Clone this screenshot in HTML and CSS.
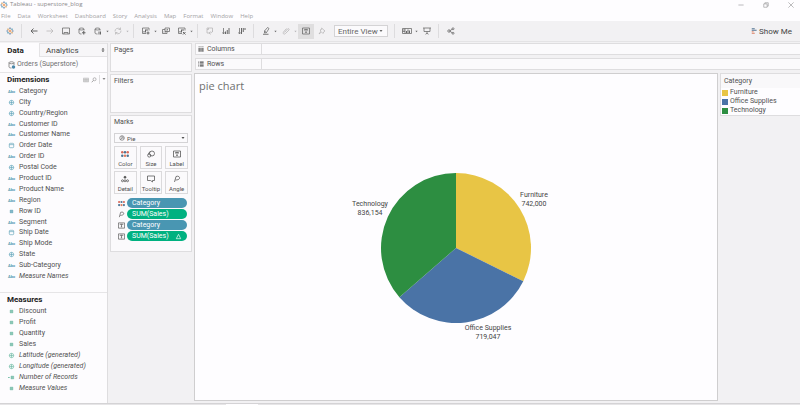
FILE: index.html
```html
<!DOCTYPE html>
<html lang="en">
<head>
    <meta charset="UTF-8">
    <meta name="viewport" content="width=device-width, initial-scale=1">
    <title>Tableau - superstore_blog</title>
    <link rel="stylesheet" href="styles.css">
</head>

<body>

<!-- Icon sprite -->
<svg class="sprite" aria-hidden="true">
    <symbol id="i-logo" viewBox="0 0 16 16"><path d="M8 5v6M5 8h6" stroke="#e8833a" stroke-width="1.6"/><path d="M8 1v3M6.500 2.500h3M8 12v3M6.500 13.500h3" stroke="#5b7fa8"/><path d="M1 8h3M2.500 6.500v3M12 8h3M13.500 6.500v3" stroke="#6b8fb0"/><path d="M4 3v3M2.500 4.500h3M12 10v3M10.500 11.500h3" stroke="#d9a05c"/><path d="M12 3v3M10.500 4.500h3M4 10v3M2.500 11.500h3" stroke="#4f9ab5"/></symbol>
    <symbol id="i-back" viewBox="0 0 16 16"><path d="M15 8H2M7 3L2 8l5 5" stroke-width="2"/></symbol>
    <symbol id="i-forward" viewBox="0 0 16 16"><path d="M1 8h13M9 3l5 5-5 5"/></symbol>
    <symbol id="i-save" viewBox="0 0 16 16"><path d="M1 2h14v12H1zM4 14v-3h8v3"/></symbol>
    <symbol id="i-data-add" viewBox="0 0 16 16"><path d="M2 4v8c0 1 2 2 5 2M12 4v3"/><ellipse cx="7" cy="4" rx="5" ry="2"/><path d="M11.500 8v7M8 11.500h7" stroke-width="2.200"/></symbol>
    <symbol id="i-data-pause" viewBox="0 0 16 16"><path d="M2 4v8c0 1 2 2 5 2M12 4v3"/><ellipse cx="7" cy="4" rx="5" ry="2"/><path d="M10 9v6M13 9v6" stroke-width="2"/></symbol>
    <symbol id="i-refresh" viewBox="0 0 16 16"><path d="M2 9a6 6 0 0 1 10-5l1 1M14 7a6 6 0 0 1-10 5l-1-1M13 1v4H9M3 15v-4h4"/></symbol>
    <symbol id="i-sheet-add" viewBox="0 0 16 16"><path d="M8 13H1V2h13v5"/><path d="M4 11V8M7 11V5M10 8V4" stroke-width="2"/><path d="M12 9v6M9 12h6" stroke-width="2"/></symbol>
    <symbol id="i-duplicate" viewBox="0 0 16 16"><path d="M6 2h9v7H6zM6 5H1v8h9V9M8.500 7V5M11 7V4M4 11V9M7 11V9"/></symbol>
    <symbol id="i-sheet-clear" viewBox="0 0 16 16"><path d="M8 13H1V2h13v5"/><path d="M4 11V8M7 11V5M10 8V4" stroke-width="2"/><path d="M10 10l5 5M15 10l-5 5" stroke-width="2"/></symbol>
    <symbol id="i-swap" viewBox="0 0 16 16"><path d="M2 5V2h11v8M2 5v7h4M5 2v3H2M13 7c0 4-2 5-6 5M9 9l-3 3 3 3"/></symbol>
    <symbol id="i-sort-asc" viewBox="0 0 16 16"><path d="M3 2v11M1 11l2 3 2-3"/><path d="M7 14V9M10.500 14V6M14 14V2" stroke-width="2"/></symbol>
    <symbol id="i-sort-desc" viewBox="0 0 16 16"><path d="M3 2v11M1 11l2 3 2-3"/><path d="M7 2v12M10.500 2v8M14 2v4" stroke-width="2"/></symbol>
    <symbol id="i-highlight" viewBox="0 0 16 16"><path d="M5 8l6-7 3 2-5 8-4 1zM5 8l4 3"/><path d="M2 14.500h11" stroke-width="1.800"/></symbol>
    <symbol id="i-clip" viewBox="0 0 16 16"><path d="M5 11l6-7c2-2 4 0 3 2l-7 7c-3 3-6 0-4-3l6-7"/></symbol>
    <symbol id="i-label" viewBox="0 0 16 16"><path d="M1 2h14v12H1zM5 7V5h6v2M8 5v6M6.500 11h3"/></symbol>
    <symbol id="i-pin" viewBox="0 0 16 16"><path d="M7 2l7 6-2 1-2 4-3-3-5 4 4-6-2-2 4-2z"/></symbol>
    <symbol id="i-cards" viewBox="0 0 20 16"><path d="M1 3h18v10H1zM6 3v10M1 6h5M1 9h5"/><path d="M9 12V8M12 12V5M15 12V7" stroke-width="2"/></symbol>
    <symbol id="i-present" viewBox="0 0 16 16"><path d="M0 2h16M2 2v7h12V2M8 9v4M5 14.500l3-2 3 2"/></symbol>
    <symbol id="i-share" viewBox="0 0 16 16"><path d="M5 8l6-4M5 8l6 4"/><circle cx="4" cy="8" r="2.500"/><circle cx="12" cy="3.500" r="2"/><circle cx="12" cy="12.500" r="2"/></symbol>
    <symbol id="i-showme" viewBox="0 0 16 16"><path d="M2 2h8" stroke="#4a6d8c" stroke-width="2.500"/><path d="M2 6h13" stroke="#4a6d8c" stroke-width="2.500"/><path d="M2 10h5" stroke="#e88a6c" stroke-width="2.500"/><path d="M2 14h8" stroke="#d9775a" stroke-width="2.500"/></symbol>
    <symbol id="i-min" viewBox="0 0 16 16"><path d="M1 8h14"/></symbol>
    <symbol id="i-restore" viewBox="0 0 16 16"><path d="M2 5h9v9H2zM5 5V2h9v9h-3"/></symbol>
    <symbol id="i-close" viewBox="0 0 16 16"><path d="M1 1l14 14M15 1L1 15"/></symbol>
    <symbol id="i-caret" viewBox="0 0 8 8"><path d="M1 2h6L4 6z" fill="currentColor" stroke="none"/></symbol>
    <symbol id="i-updown" viewBox="0 0 8 8"><path d="M4 0l3 3H1zM1 5h6L4 8z" fill="currentColor" stroke="none"/></symbol>
    <symbol id="i-source" viewBox="0 0 16 16"><ellipse cx="7" cy="3.500" rx="5" ry="2"/><path d="M2 3.500V12c0 1 2 2 5 2M12 3.500V8"/><circle cx="11" cy="12" r="3.500" fill="#4a86a8" stroke="none"/></symbol>
    <symbol id="i-globe" viewBox="0 0 16 16"><circle cx="8" cy="8" r="5"/><path d="M3 8h10M8 3v10"/></symbol>
    <symbol id="i-date" viewBox="0 0 16 16"><rect x="3" y="3" width="10" height="10" rx="2"/><path d="M3 6h10"/></symbol>
    <symbol id="i-number" viewBox="0 0 16 16"><path d="M6.500 4v8M9.500 4v8M4 6.500h8M4 9.500h8" stroke-width="2"/></symbol>
    <symbol id="i-calc" viewBox="0 0 16 16"><path d="M8.500 4v8M11.500 4v8M6 6.500h8M6 9.500h8" stroke-width="2"/><path d="M0 8h4" stroke-width="2"/></symbol>
    <symbol id="i-grid" viewBox="0 0 16 16"><path d="M1 3h14v10H1zM1 6.500h14M1 10h14M5.500 3v10M10.500 3v10" stroke-width="1"/></symbol>
    <symbol id="i-search" viewBox="0 0 16 16"><circle cx="9.500" cy="6" r="4"/><path d="M6.500 9L2 14" stroke-width="2"/></symbol>
    <symbol id="i-columns" viewBox="0 0 16 16"><path d="M3 5v10M8 5v10M13 5v10M3 1v2M8 1v2M13 1v2" stroke-width="3"/></symbol>
    <symbol id="i-rows" viewBox="0 0 16 16"><path d="M5 3h10M5 8h10M5 13h10M1 3h2M1 8h2M1 13h2" stroke-width="3"/></symbol>
    <symbol id="i-pie" viewBox="0 0 16 16"><circle cx="8" cy="8" r="6"/><path d="M8 2v6h6M8 8L4 12.500"/></symbol>
    <symbol id="i-color" viewBox="0 0 16 16"><g stroke="none"><circle cx="2.500" cy="4.500" r="2.500" fill="#d96a5a"/><circle cx="8" cy="4.500" r="2.500" fill="#4a7494"/><circle cx="13.500" cy="4.500" r="2.500" fill="#d96a5a"/><circle cx="2.500" cy="11.500" r="2.500" fill="#4a7494"/><circle cx="8" cy="11.500" r="2.500" fill="#e07a5c"/><circle cx="13.500" cy="11.500" r="2.500" fill="#4a7494"/></g></symbol>
    <symbol id="i-size" viewBox="0 0 16 16"><circle cx="10" cy="7" r="5"/><circle cx="4.500" cy="11" r="3.200"/><path d="M2 9l4-6"/></symbol>
    <symbol id="i-detail" viewBox="0 0 16 16"><circle cx="3" cy="11.500" r="2"/><circle cx="8" cy="11.500" r="2"/><circle cx="13" cy="11.500" r="2"/><circle cx="8" cy="4.500" r="2" fill="currentColor"/></symbol>
    <symbol id="i-tooltip" viewBox="0 0 16 16"><path d="M1 2h14v9h-4v3l-4-3H1z"/></symbol>
    <symbol id="i-angle" viewBox="0 0 16 16"><path d="M3 14L6 3c5-2 8 1 7 4-1 2-4 3-8 3"/></symbol>
    <symbol id="i-delta" viewBox="0 0 16 16"><path d="M8 3l5 10H3z"/></symbol>
</svg>

<header>
    <div class="titlebar">
        <svg class="icon app-icon"><use href="#i-logo"/></svg>
        <span>Tableau - superstore_blog</span>
        <div class="window-controls">
            <button aria-label="Minimize"><svg class="icon"><use href="#i-min"/></svg></button>
            <button aria-label="Restore"><svg class="icon"><use href="#i-restore"/></svg></button>
            <button aria-label="Close"><svg class="icon"><use href="#i-close"/></svg></button>
        </div>
    </div>

    <nav class="menu">
        <a href="#">File</a>
        <a href="#">Data</a>
        <a href="#">Worksheet</a>
        <a href="#">Dashboard</a>
        <a href="#">Story</a>
        <a href="#">Analysis</a>
        <a href="#">Map</a>
        <a href="#">Format</a>
        <a href="#">Window</a>
        <a href="#">Help</a>
    </nav>

    <div class="toolbar">
        <button class="tool" aria-label="Start page"><svg class="icon"><use href="#i-logo"/></svg></button>
        <span class="sep"></span>
        <button class="tool" aria-label="Undo"><svg class="icon"><use href="#i-back"/></svg></button>
        <button class="tool dim" aria-label="Redo"><svg class="icon"><use href="#i-forward"/></svg></button>
        <button class="tool" aria-label="Save"><svg class="icon"><use href="#i-save"/></svg></button>
        <button class="tool" aria-label="New data source"><svg class="icon"><use href="#i-data-add"/></svg></button>
        <button class="tool" aria-label="Pause updates"><svg class="icon"><use href="#i-data-pause"/></svg></button>
        <button class="caret" aria-label="Update options"><svg><use href="#i-caret"/></svg></button>
        <button class="tool dim" aria-label="Refresh"><svg class="icon"><use href="#i-refresh"/></svg></button>
        <button class="caret dim" aria-label="Refresh options"><svg><use href="#i-caret"/></svg></button>
        <span class="sep"></span>
        <button class="tool" aria-label="New worksheet"><svg class="icon"><use href="#i-sheet-add"/></svg></button>
        <button class="caret" aria-label="New worksheet options"><svg><use href="#i-caret"/></svg></button>
        <button class="tool" aria-label="Duplicate"><svg class="icon"><use href="#i-duplicate"/></svg></button>
        <button class="tool" aria-label="Clear sheet"><svg class="icon"><use href="#i-sheet-clear"/></svg></button>
        <button class="caret" aria-label="Clear options"><svg><use href="#i-caret"/></svg></button>
        <span class="sep"></span>
        <button class="tool dim" aria-label="Swap rows and columns"><svg class="icon"><use href="#i-swap"/></svg></button>
        <button class="tool" aria-label="Sort ascending"><svg class="icon"><use href="#i-sort-asc"/></svg></button>
        <button class="tool" aria-label="Sort descending"><svg class="icon"><use href="#i-sort-desc"/></svg></button>
        <span class="sep"></span>
        <button class="tool" aria-label="Highlight"><svg class="icon"><use href="#i-highlight"/></svg></button>
        <button class="caret" aria-label="Highlight options"><svg><use href="#i-caret"/></svg></button>
        <button class="tool dim" aria-label="Group members"><svg class="icon"><use href="#i-clip"/></svg></button>
        <button class="caret dim" aria-label="Group options"><svg><use href="#i-caret"/></svg></button>
        <button class="tool active" aria-label="Show mark labels"><svg class="icon"><use href="#i-label"/></svg></button>
        <button class="tool dim" aria-label="Fix axes"><svg class="icon"><use href="#i-pin"/></svg></button>
        <div class="select fit">
            <select aria-label="Fit">
                <option>Entire View</option>
                <option>Standard</option>
            </select>
            <svg class="arrow"><use href="#i-caret"/></svg>
        </div>
        <span class="sep"></span>
        <button class="tool" aria-label="Show or hide cards"><svg class="icon wide"><use href="#i-cards"/></svg></button>
        <button class="caret" aria-label="Card options"><svg><use href="#i-caret"/></svg></button>
        <button class="tool" aria-label="Presentation mode"><svg class="icon"><use href="#i-present"/></svg></button>
        <span class="sep"></span>
        <button class="tool" aria-label="Share"><svg class="icon"><use href="#i-share"/></svg></button>
        <button class="show-me"><svg class="icon"><use href="#i-showme"/></svg>Show Me</button>
    </div>
</header>

<main class="workspace">
    <aside class="data-pane">
        <div class="tabs">
            <button class="tab selected">Data</button>
            <button class="tab">Analytics<svg class="arrow"><use href="#i-updown"/></svg></button>
        </div>
        <a class="source" href="#"><svg class="icon"><use href="#i-source"/></svg>Orders (Superstore)</a>

        <section class="dimensions">
            <div class="pane-head">
                <h2>Dimensions</h2>
                <button aria-label="View data"><svg class="icon"><use href="#i-grid"/></svg></button>
                <button aria-label="Find field"><svg class="icon"><use href="#i-search"/></svg></button>
                <button class="more" aria-label="Pane options"><svg class="arrow"><use href="#i-caret"/></svg></button>
            </div>
            <ul class="fields">
                <li><span class="abc">Abc</span>Category</li>
                <li><svg class="icon"><use href="#i-globe"/></svg>City</li>
                <li><svg class="icon"><use href="#i-globe"/></svg>Country/Region</li>
                <li><span class="abc">Abc</span>Customer ID</li>
                <li><span class="abc">Abc</span>Customer Name</li>
                <li><svg class="icon"><use href="#i-date"/></svg>Order Date</li>
                <li><span class="abc">Abc</span>Order ID</li>
                <li><svg class="icon"><use href="#i-globe"/></svg>Postal Code</li>
                <li><span class="abc">Abc</span>Product ID</li>
                <li><span class="abc">Abc</span>Product Name</li>
                <li><span class="abc">Abc</span>Region</li>
                <li><svg class="icon"><use href="#i-number"/></svg>Row ID</li>
                <li><span class="abc">Abc</span>Segment</li>
                <li><svg class="icon"><use href="#i-date"/></svg>Ship Date</li>
                <li><span class="abc">Abc</span>Ship Mode</li>
                <li><svg class="icon"><use href="#i-globe"/></svg>State</li>
                <li><span class="abc">Abc</span>Sub-Category</li>
                <li><span class="abc">Abc</span><em>Measure Names</em></li>
            </ul>
        </section>

        <section class="measures">
            <div class="pane-head">
                <h2>Measures</h2>
            </div>
            <ul class="fields">
                <li><svg class="icon"><use href="#i-number"/></svg>Discount</li>
                <li><svg class="icon"><use href="#i-number"/></svg>Profit</li>
                <li><svg class="icon"><use href="#i-number"/></svg>Quantity</li>
                <li><svg class="icon"><use href="#i-number"/></svg>Sales</li>
                <li><svg class="icon"><use href="#i-globe"/></svg><em>Latitude (generated)</em></li>
                <li><svg class="icon"><use href="#i-globe"/></svg><em>Longitude (generated)</em></li>
                <li><svg class="icon"><use href="#i-calc"/></svg><em>Number of Records</em></li>
                <li><svg class="icon"><use href="#i-number"/></svg><em>Measure Values</em></li>
            </ul>
        </section>
    </aside>

    <aside class="cards">
        <section class="card pages"><h3>Pages</h3></section>
        <section class="card filters"><h3>Filters</h3></section>
        <section class="card marks">
            <h3>Marks</h3>
            <div class="select mark-type">
                <svg class="icon"><use href="#i-pie"/></svg>
                <select aria-label="Mark type">
                    <option>Pie</option>
                    <option>Bar</option>
                </select>
                <svg class="arrow"><use href="#i-caret"/></svg>
            </div>
            <div class="mark-buttons">
                <button><svg class="icon"><use href="#i-color"/></svg>Color</button>
                <button><svg class="icon"><use href="#i-size"/></svg>Size</button>
                <button><svg class="icon"><use href="#i-label"/></svg>Label</button>
                <button><svg class="icon"><use href="#i-detail"/></svg>Detail</button>
                <button><svg class="icon"><use href="#i-tooltip"/></svg>Tooltip</button>
                <button><svg class="icon"><use href="#i-angle"/></svg>Angle</button>
            </div>
            <ul class="pills">
                <li><svg class="icon"><use href="#i-color"/></svg><span class="pill blue">Category</span></li>
                <li><svg class="icon"><use href="#i-angle"/></svg><span class="pill green">SUM(Sales)</span></li>
                <li><svg class="icon"><use href="#i-label"/></svg><span class="pill blue">Category</span></li>
                <li><svg class="icon"><use href="#i-label"/></svg><span class="pill green">SUM(Sales)<svg class="icon"><use href="#i-delta"/></svg></span></li>
            </ul>
        </section>
    </aside>

    <div class="sheet">
        <div class="shelf"><span class="shelf-name"><svg class="icon"><use href="#i-columns"/></svg>Columns</span></div>
        <div class="shelf"><span class="shelf-name"><svg class="icon"><use href="#i-rows"/></svg>Rows</span></div>
        <div class="view-row">
            <section class="view">
                <h1>pie chart</h1>
                <div class="chart">
                    <svg viewBox="-110 -100 220 200" role="img" aria-label="Sales by category">
                        <path class="furniture" d="M0 0V-75A75 75 0 0 1 67.25 33.2z"/>
                        <path class="office" d="M0 0L67.25 33.2A75 75 0 0 1 -56.6 49.2z"/>
                        <path class="technology" d="M0 0L-56.6 49.2A75 75 0 0 1 0 -75z"/>
                        <text x="78" y="-51">Furniture</text>
                        <text x="78" y="-42">742,000</text>
                        <text x="32" y="82">Office Supplies</text>
                        <text x="32" y="91">719,047</text>
                        <text x="-86" y="-42">Technology</text>
                        <text x="-86" y="-33">836,154</text>
                    </svg>
                </div>
            </section>
            <aside class="legend">
                <h3>Category</h3>
                <ul>
                    <li><span class="swatch furniture"></span>Furniture</li>
                    <li><span class="swatch office"></span>Office Supplies</li>
                    <li><span class="swatch technology"></span>Technology</li>
                </ul>
            </aside>
        </div>
    </div>
</main>

<footer class="sheet-tabs">
    <span class="sheet-tab current"></span>
</footer>

</body>
</html>
```

FILE: styles.css
```css
* {
    box-sizing: border-box;
}

body {
    font-family: Roboto, "Liberation Sans", sans-serif;
    font-size: 7px;
    line-height: 9px;
    color: #505050;
    background: #f2f1f3;
    margin: 0;
    height: 100vh;
    display: flex;
    flex-direction: column;
    overflow: hidden;
}

h1, h2, h3, ul {
    margin: 0;
    padding: 0;
    font-size: 7px;
    font-weight: normal;
    list-style: none;
}

button, select {
    font: inherit;
    color: inherit;
    background: none;
    border: 0;
    padding: 0;
    margin: 0;
}

a {
    color: inherit;
    text-decoration: none;
}

.sprite {
    display: none;
}

.icon {
    display: block;
    flex: none;
    width: 8px;
    height: 8px;
    fill: none;
    stroke: currentColor;
    stroke-width: 1.5;
}

.icon.wide {
    width: 10px;
}

.arrow {
    flex: none;
    width: 4px;
    height: 4px;
}

/* Title bar and menu */
.titlebar {
    display: flex;
    align-items: center;
    gap: 2px;
    height: 9px;
    background: #fefdff;
    color: #8a898b;
    font-family: "Open Sans", "Noto Sans", sans-serif;
    font-size: 6px;
}

.window-controls {
    display: flex;
    gap: 19px;
    margin-left: auto;
    padding-right: 6px;
}

.window-controls .icon {
    width: 6px;
    height: 6px;
}

.menu {
    display: flex;
    align-items: center;
    gap: 7px;
    height: 12px;
    padding: 2px 1px 0;
    background: #fefdff;
    color: #a3a2a4;
    font-family: "Open Sans", "Noto Sans", sans-serif;
    font-size: 6px;
}

/* Toolbar */
.toolbar {
    display: flex;
    align-items: center;
    height: 21px;
    padding: 0 8px 0 2px;
    background: #f2f1f3;
    border-bottom: 1px solid #e4e3e5;
    color: #666;
}

.tool {
    display: flex;
    align-items: center;
    justify-content: center;
    flex: none;
    width: 16px;
    height: 15px;
}

.tool.active {
    background: #dfdedf;
}

.caret {
    display: flex;
    flex: none;
    width: 4px;
}

.caret svg {
    width: 3px;
    height: 3px;
}

.dim {
    color: #b5b4b6;
}

.sep {
    flex: none;
    width: 1px;
    height: 14px;
    margin: 0 4px 0 3px;
    background: #dddcde;
}

.select {
    display: flex;
    align-items: center;
    background: #fbfafc;
    border: 1px solid #d4d3d5;
}

.select select {
    flex: 1;
    min-width: 0;
    appearance: none;
    outline: 0;
}

.fit {
    flex: none;
    width: 54px;
    height: 12px;
    margin: 0 3px 0 4px;
    padding: 0 3px;
    font-size: 8px;
}

.fit .arrow {
    margin-right: 1px;
}

.show-me {
    display: flex;
    align-items: center;
    gap: 2px;
    margin-left: auto;
    font-size: 8px;
    color: #444;
}

.show-me .icon {
    width: 6px;
    height: 6px;
}

/* Workspace */
.workspace {
    flex: 1;
    min-height: 0;
    display: flex;
    gap: 2px;
    padding-top: 1px;
}

.data-pane {
    display: flex;
    flex-direction: column;
    width: 108px;
    background: #fdfcfe;
    border-right: 1px solid #dedddf;
}

.tabs {
    display: flex;
    height: 14px;
}

.tab {
    width: 39px;
    text-align: center;
    font-size: 8px;
    color: #444;
}

.tab.selected {
    font-weight: bold;
    padding-right: 8px;
    color: #222;
}

.tab + .tab {
    display: flex;
    align-items: center;
    justify-content: space-between;
    flex: 1;
    padding: 0 2px 0 6px;
    background: #f7f6f8;
    border: 1px solid #e4e3e5;
    border-right: 0;
}

.source {
    display: flex;
    align-items: center;
    gap: 1px;
    height: 16px;
    padding-left: 8px;
    border-bottom: 1px solid #e6e5e7;
    color: #707070;
}

.pane-head {
    display: flex;
    align-items: center;
    gap: 2px;
    height: 13px;
    padding: 0 1px 0 7px;
    color: #888;
}

.pane-head h2 {
    flex: 1;
    font-size: 8px;
    font-weight: bold;
    color: #222;
}

.pane-head .icon {
    width: 6px;
    height: 6px;
}

.more {
    padding-left: 2px;
    border-left: 1px solid #dedddf;
}

.dimensions, .measures {
    display: flex;
    flex-direction: column;
}

.dimensions {
    flex: 1;
    padding-bottom: 10px;
}

.measures {
    height: 111px;
    padding-bottom: 9px;
    border-top: 1px solid #e6e5e7;
}

.fields {
    flex: 1;
    display: grid;
    grid-auto-rows: 1fr;
    padding-left: 8px;
}

.fields li {
    display: grid;
    grid-template-columns: 7px 1fr;
    align-items: center;
    gap: 4px;
}

.fields .icon {
    width: 7px;
    height: 7px;
    color: #5fa3b8;
}

.measures .icon {
    color: #6bb8a2;
}

.abc {
    font-size: 4px;
    font-weight: bold;
    color: #4f9ab0;
}

/* Cards */
.cards {
    display: flex;
    flex-direction: column;
    gap: 2px;
    width: 82px;
}

.card {
    padding: 2px 3px;
    background: #fbfafc;
    border: 1px solid #dedddf;
}

.pages {
    height: 29px;
}

.filters {
    height: 39px;
}

.marks {
    height: 137px;
}

.marks h3 {
    margin-bottom: 6px;
}

.mark-type {
    height: 10px;
    gap: 2px;
    padding: 0 2px 0 4px;
    font-size: 6px;
}

.mark-type .icon {
    width: 6px;
    height: 6px;
}

.mark-buttons {
    display: grid;
    grid-template-columns: repeat(3, 1fr);
    gap: 2px 3px;
    margin-top: 3px;
}

.mark-buttons button {
    display: flex;
    flex-direction: column;
    align-items: center;
    justify-content: space-between;
    height: 23px;
    padding: 3px 0 0;
    border: 1px solid #dbdadc;
    font-size: 6px;
}

.pills {
    display: grid;
    gap: 1px;
    margin-top: 4px;
}

.pills li {
    display: flex;
    align-items: center;
    gap: 2px;
    padding: 0 1px 0 4px;
}

.pills .icon {
    width: 7px;
    height: 7px;
}

.pill {
    flex: 1;
    display: flex;
    align-items: center;
    justify-content: space-between;
    height: 10px;
    padding: 0 5px;
    border-radius: 5px;
    color: #fff;
}

.pill.blue {
    background: #4996b2;
}

.pill.green {
    background: #00b180;
}

/* Shelves and view */
.sheet {
    flex: 1;
    min-width: 0;
    display: flex;
    flex-direction: column;
    gap: 3px;
}

.shelf {
    display: flex;
    height: 12px;
    margin-left: 1px;
    background: #fbfafc;
    border: 1px solid #dedddf;
    border-right: 0;
}

.shelf-name {
    display: flex;
    align-items: center;
    gap: 3px;
    width: 66px;
    padding-left: 2px;
    border-right: 1px solid #dedddf;
}

.shelf-name .icon {
    width: 6px;
    height: 6px;
}

.view-row {
    flex: 1;
    min-height: 0;
    display: flex;
    align-items: flex-start;
    gap: 2px;
    padding-bottom: 2px;
}

.view {
    flex: 1;
    align-self: stretch;
    display: flex;
    flex-direction: column;
    background: #fefdff;
    border: 1px solid #cfcecf;
}

.view h1 {
    padding: 4px 4px 2px;
    font-family: "Open Sans", "Noto Sans", sans-serif;
    font-size: 11px;
    line-height: 16px;
    color: #707070;
}

.chart {
    flex: 1;
    display: flex;
    align-items: center;
    justify-content: center;
}

.chart svg {
    width: 220px;
    height: 200px;
    overflow: visible;
}

.chart text {
    text-anchor: middle;
    font-size: 7px;
    fill: #444;
}

.furniture {
    fill: #e8c545;
    background: #e8c545;
}

.office {
    fill: #4a73a6;
    background: #4a73a6;
}

.technology {
    fill: #2d8e41;
    background: #2d8e41;
}

.legend {
    width: 80px;
    background: #fefdff;
    border: 1px solid #dedddf;
    border-right: 0;
}

.legend h3 {
    padding: 3px 3px 2px;
    background: #f9f8fa;
}

.legend li {
    display: flex;
    align-items: center;
    gap: 2px;
    padding-left: 1px;
}

.swatch {
    width: 6px;
    height: 6px;
}

/* Sheet tabs */
.sheet-tabs {
    height: 2px;
    padding-left: 226px;
    background: #e6e5e7;
    border-top: 1px solid #d4d3d5;
}

.sheet-tab {
    display: block;
    width: 32px;
    height: 1px;
    background: #fefdff;
}
```
